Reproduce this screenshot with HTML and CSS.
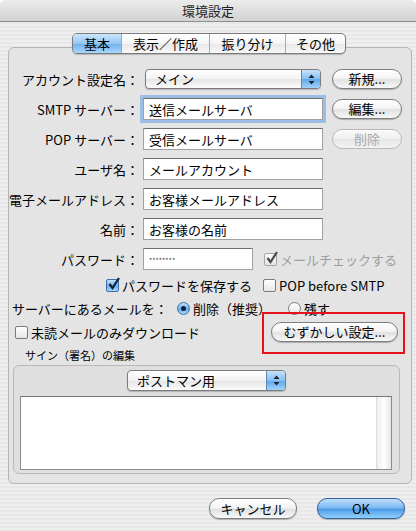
FILE: index.html
```html
<!DOCTYPE html>
<html lang="ja">
<head>
    <meta charset="UTF-8">
    <meta name="viewport" content="width=device-width, initial-scale=1.0">
    <title>環境設定</title>
    <link rel="stylesheet" href="styles.css">
</head>
<body>
    <div class="window">
        <div class="titlebar">環境設定</div>

        <div class="tabs">
            <span class="tab tab-basic active">基本</span>
            <span class="tab tab-view">表示／作成</span>
            <span class="tab tab-filter">振り分け</span>
            <span class="tab tab-other">その他</span>
        </div>

        <div class="panel">
            <div class="row row-first">
                <span class="label">アカウント設定名：</span>
                <div class="popup popup-account">
                    <span class="popup-text">メイン</span>
                    <span class="popup-arrows">
                        <svg width="7" height="11" viewBox="0 0 7 11"><path d="M3.5 0.5 L6.5 4 L0.5 4 Z M3.5 10.5 L6.5 7 L0.5 7 Z" fill="#1c2430"/></svg>
                    </span>
                </div>
                <button class="btn btn-side">新規...</button>
            </div>
            <div class="row">
                <span class="label">SMTP サーバー：</span>
                <input class="field focused" type="text" value="送信メールサーバ">
                <button class="btn btn-side">編集...</button>
            </div>
            <div class="row">
                <span class="label">POP サーバー：</span>
                <input class="field" type="text" value="受信メールサーバ">
                <button class="btn btn-side disabled">削除</button>
            </div>
            <div class="row">
                <span class="label">ユーザ名：</span>
                <input class="field" type="text" value="メールアカウント">
            </div>
            <div class="row">
                <span class="label">電子メールアドレス：</span>
                <input class="field" type="text" value="お客様メールアドレス">
            </div>
            <div class="row">
                <span class="label">名前：</span>
                <input class="field" type="text" value="お客様の名前">
            </div>
            <div class="row">
                <span class="label">パスワード：</span>
                <div class="field field-short"><span class="dots">********</span></div>
                <span class="option option-mailcheck dim">
                    <span class="check on-gray">
                        <svg width="14" height="14" viewBox="0 0 14 14"><path d="M2.5 7 L5.5 11 L12 1" fill="none" stroke="#4a4a4a" stroke-width="2.2"/></svg>
                    </span>
                    メールチェックする
                </span>
            </div>

            <div class="row row-checks">
                <span class="option option-save">
                    <span class="check on">
                        <svg width="14" height="14" viewBox="0 0 14 14"><path d="M2.5 7 L5.5 11 L12 1" fill="none" stroke="#10213a" stroke-width="2.2"/></svg>
                    </span>
                    パスワードを保存する
                </span>
                <span class="option">
                    <span class="check"></span>
                    POP before SMTP
                </span>
            </div>
            <div class="row row-radios">
                <span class="radio-label">サーバーにあるメールを：</span>
                <span class="option option-delete"><span class="radio on"></span>削除（推奨）</span>
                <span class="option"><span class="radio"></span>残す</span>
            </div>
            <div class="row row-unread">
                <span class="option"><span class="check"></span>未読メールのみダウンロード</span>
                <button class="btn btn-advanced">むずかしい設定...</button>
            </div>

            <div class="highlight"></div>

            <div class="group-title">サイン（署名）の編集</div>
            <div class="group">
                <div class="popup popup-sign">
                    <span class="popup-text">ポストマン用</span>
                    <span class="popup-arrows">
                        <svg width="7" height="11" viewBox="0 0 7 11"><path d="M3.5 0.5 L6.5 4 L0.5 4 Z M3.5 10.5 L6.5 7 L0.5 7 Z" fill="#1c2430"/></svg>
                    </span>
                </div>
                <div class="sign-text">
                    <div class="scrollbar"></div>
                </div>
            </div>
        </div>

        <div class="footer">
            <button class="btn btn-footer">キャンセル</button>
            <button class="btn btn-footer btn-ok">OK</button>
        </div>
    </div>
</body>
</html>
```

FILE: styles.css
```css
* {
    margin: 0;
    padding: 0;
    box-sizing: border-box;
}

body {
    font-family: "Noto Sans CJK JP", "Noto Sans", sans-serif;
    font-size: 13px;
    color: #000;
    background-color: #ffffff;
}

.window {
    width: 416px;
    height: 531px;
    overflow: hidden;
    border-radius: 6px 6px 0 0;
    background: repeating-linear-gradient(to bottom, #eeeeee 0, #eeeeee 2px, #e8e8e8 2px, #e8e8e8 4px);
}

.titlebar {
    height: 22px;
    line-height: 21px;
    text-align: center;
    color: #1e1e1e;
    border-bottom: 1px solid #8e8e8e;
    background: linear-gradient(#ececec, #d2d2d2);
}

/* segmented tabs */
.tabs {
    position: relative;
    z-index: 1;
    display: flex;
    width: 274px;
    height: 21px;
    margin: 11px 0 0 72px;
    border: 1px solid #7b7b7b;
    border-radius: 5px;
    overflow: hidden;
    background: linear-gradient(#ffffff, #f5f5f5 50%, #e7e7e7 51%, #f8f8f8);
    box-shadow: 0 1px 1px rgba(0, 0, 0, 0.2);
}

.tab {
    line-height: 19px;
    text-align: center;
    border-left: 1px solid #a8a8a8;
}

.tab-basic { width: 48px; border-left: none; }
.tab-view { width: 88px; }
.tab-filter { width: 76px; }
.tab-other { flex: 1; }

.tab.active {
    background: linear-gradient(#cde5fb, #94c7f3 50%, #6cb0ee 51%, #a9d8fc);
}

/* tab panel */
.panel {
    position: relative;
    width: 404px;
    height: 437px;
    margin: -7px 0 0 8px;
    padding-top: 16px;
    border: 1px solid #b4b4b4;
    border-radius: 6px;
    background-color: #e4e4e4;
}

.row {
    display: flex;
    align-items: center;
    height: 30px;
}

.label {
    width: 130px;
    margin-right: 4px;
    flex-shrink: 0;
    text-align: right;
    white-space: nowrap;
}

.field {
    width: 180px;
    height: 22px;
    padding: 0 5px;
    border: 1px solid #a0a0a0;
    border-top-color: #6e6e6e;
    background-color: #fff;
    font: inherit;
    color: #000;
    outline: none;
    display: flex;
    align-items: center;
}

.field.focused {
    box-shadow: 0 0 0 3px #9bbde6;
}

.field-short {
    width: 110px;
}

.dots {
    font-size: 7px;
    letter-spacing: 0px;
    color: #444;
    margin-top: 2px;
}

/* popup menus */
.popup {
    display: flex;
    align-items: center;
    height: 20px;
    border: 1px solid #7c7c7c;
    border-radius: 4px;
    overflow: hidden;
    background: linear-gradient(#ffffff, #f2f2f2 50%, #e5e5e5 51%, #fbfbfb);
    box-shadow: 0 1px 1px rgba(0, 0, 0, 0.2);
}

.popup-text {
    flex: 1;
    padding-left: 9px;
    line-height: 18px;
}

.popup-arrows {
    width: 19px;
    height: 100%;
    display: flex;
    align-items: center;
    justify-content: center;
    border-left: 1px solid #5a86ba;
    background: linear-gradient(#c6e2fb, #86c0f3 50%, #5ea7ec 51%, #9fd4fc);
}

.popup-account {
    width: 176px;
    margin: 0 0 0 2px;
}

.popup-sign {
    width: 159px;
    height: 21px;
    margin: 0 auto;
}

/* aqua buttons */
.btn {
    height: 20px;
    padding: 0;
    border: 1px solid #7e7e7e;
    border-radius: 10px;
    background: linear-gradient(#ffffff, #f4f4f4 45%, #e1e1e1 55%, #f8f8f8);
    box-shadow: 0 1px 1px rgba(0, 0, 0, 0.25);
    font: inherit;
    line-height: 18px;
    color: #000;
}

.btn-side {
    width: 70px;
    margin-left: 9px;
}

.row-first .btn-side {
    margin-left: 11px;
}

.btn.disabled {
    color: #a9a9a9;
    border-color: #b8b8b8;
    box-shadow: none;
    background: linear-gradient(#fafafa, #efefef 50%, #e6e6e6 51%, #f3f3f3);
}

.btn-advanced {
    width: 127px;
    margin-left: auto;
    margin-right: 13px;
}

/* check boxes and radios */
.option {
    display: flex;
    align-items: center;
    white-space: nowrap;
}

.option.dim {
    color: #9c9c9c;
}

.check {
    position: relative;
    width: 13px;
    height: 13px;
    margin-right: 3px;
    flex-shrink: 0;
    border: 1px solid #7a7a7a;
    border-radius: 2px;
    background: linear-gradient(#ffffff, #e6e6e6);
}

.check svg {
    position: absolute;
    left: 0;
    top: -3px;
}

.check.on {
    border-color: #3f6fa6;
    background: linear-gradient(#c4e1fb, #6aaeee 55%, #a3d6fc);
}

.check.on-gray {
    border-color: #a5a5a5;
    background: linear-gradient(#fafafa, #e4e4e4);
}

.option-mailcheck {
    margin-left: 11px;
}

.row-checks {
    height: 22px;
    padding-left: 97px;
}

.option-save {
    width: 157px;
}

.row-radios {
    height: 24px;
    padding-left: 3px;
}

.radio-label {
    width: 165px;
    white-space: nowrap;
}

.radio {
    position: relative;
    width: 13px;
    height: 13px;
    margin-right: 3px;
    flex-shrink: 0;
    border: 1px solid #7a7a7a;
    border-radius: 50%;
    background: linear-gradient(#ffffff, #e4e4e4);
}

.radio.on {
    border-color: #3f6fa6;
    background: linear-gradient(#c4e1fb, #6aaeee 55%, #a3d6fc);
}

.radio.on::after {
    content: "";
    position: absolute;
    left: 3px;
    top: 3px;
    width: 5px;
    height: 5px;
    border-radius: 50%;
    background-color: #142238;
}

.option-delete {
    width: 111px;
}

.row-unread {
    height: 24px;
    padding-left: 6px;
}

/* red annotation box */
.highlight {
    position: absolute;
    left: 253px;
    top: 264px;
    width: 143px;
    height: 42px;
    border: 2px solid #e5121c;
}

/* signature group */
.group-title {
    margin-top: 4px;
    padding-left: 16px;
    font-size: 11px;
    line-height: 14px;
}

.group {
    width: 387px;
    height: 109px;
    margin: 3px 0 0 4px;
    padding-top: 4px;
    border: 1px solid #b9b9b9;
    border-radius: 6px;
    background-color: #dfdfdf;
}

.sign-text {
    display: flex;
    justify-content: flex-end;
    width: 372px;
    height: 74px;
    margin: 5px 0 0 6px;
    border: 1px solid #8c8c8c;
    border-top-color: #777;
    background-color: #fff;
}

.scrollbar {
    width: 15px;
    height: 100%;
    border-left: 1px solid #dcdcdc;
    background: linear-gradient(to right, #eeeeee, #ffffff 50%, #e6e6e6);
}

/* dialog buttons */
.footer {
    display: flex;
    justify-content: flex-end;
    gap: 20px;
    margin-top: 14px;
    padding-right: 11px;
}

.btn-footer {
    width: 88px;
    height: 21px;
}

.btn-ok {
    border-color: #35609a;
    background: linear-gradient(#bfdffc, #7fb9f1 45%, #4e9be8 55%, #92d1fd);
}
```
